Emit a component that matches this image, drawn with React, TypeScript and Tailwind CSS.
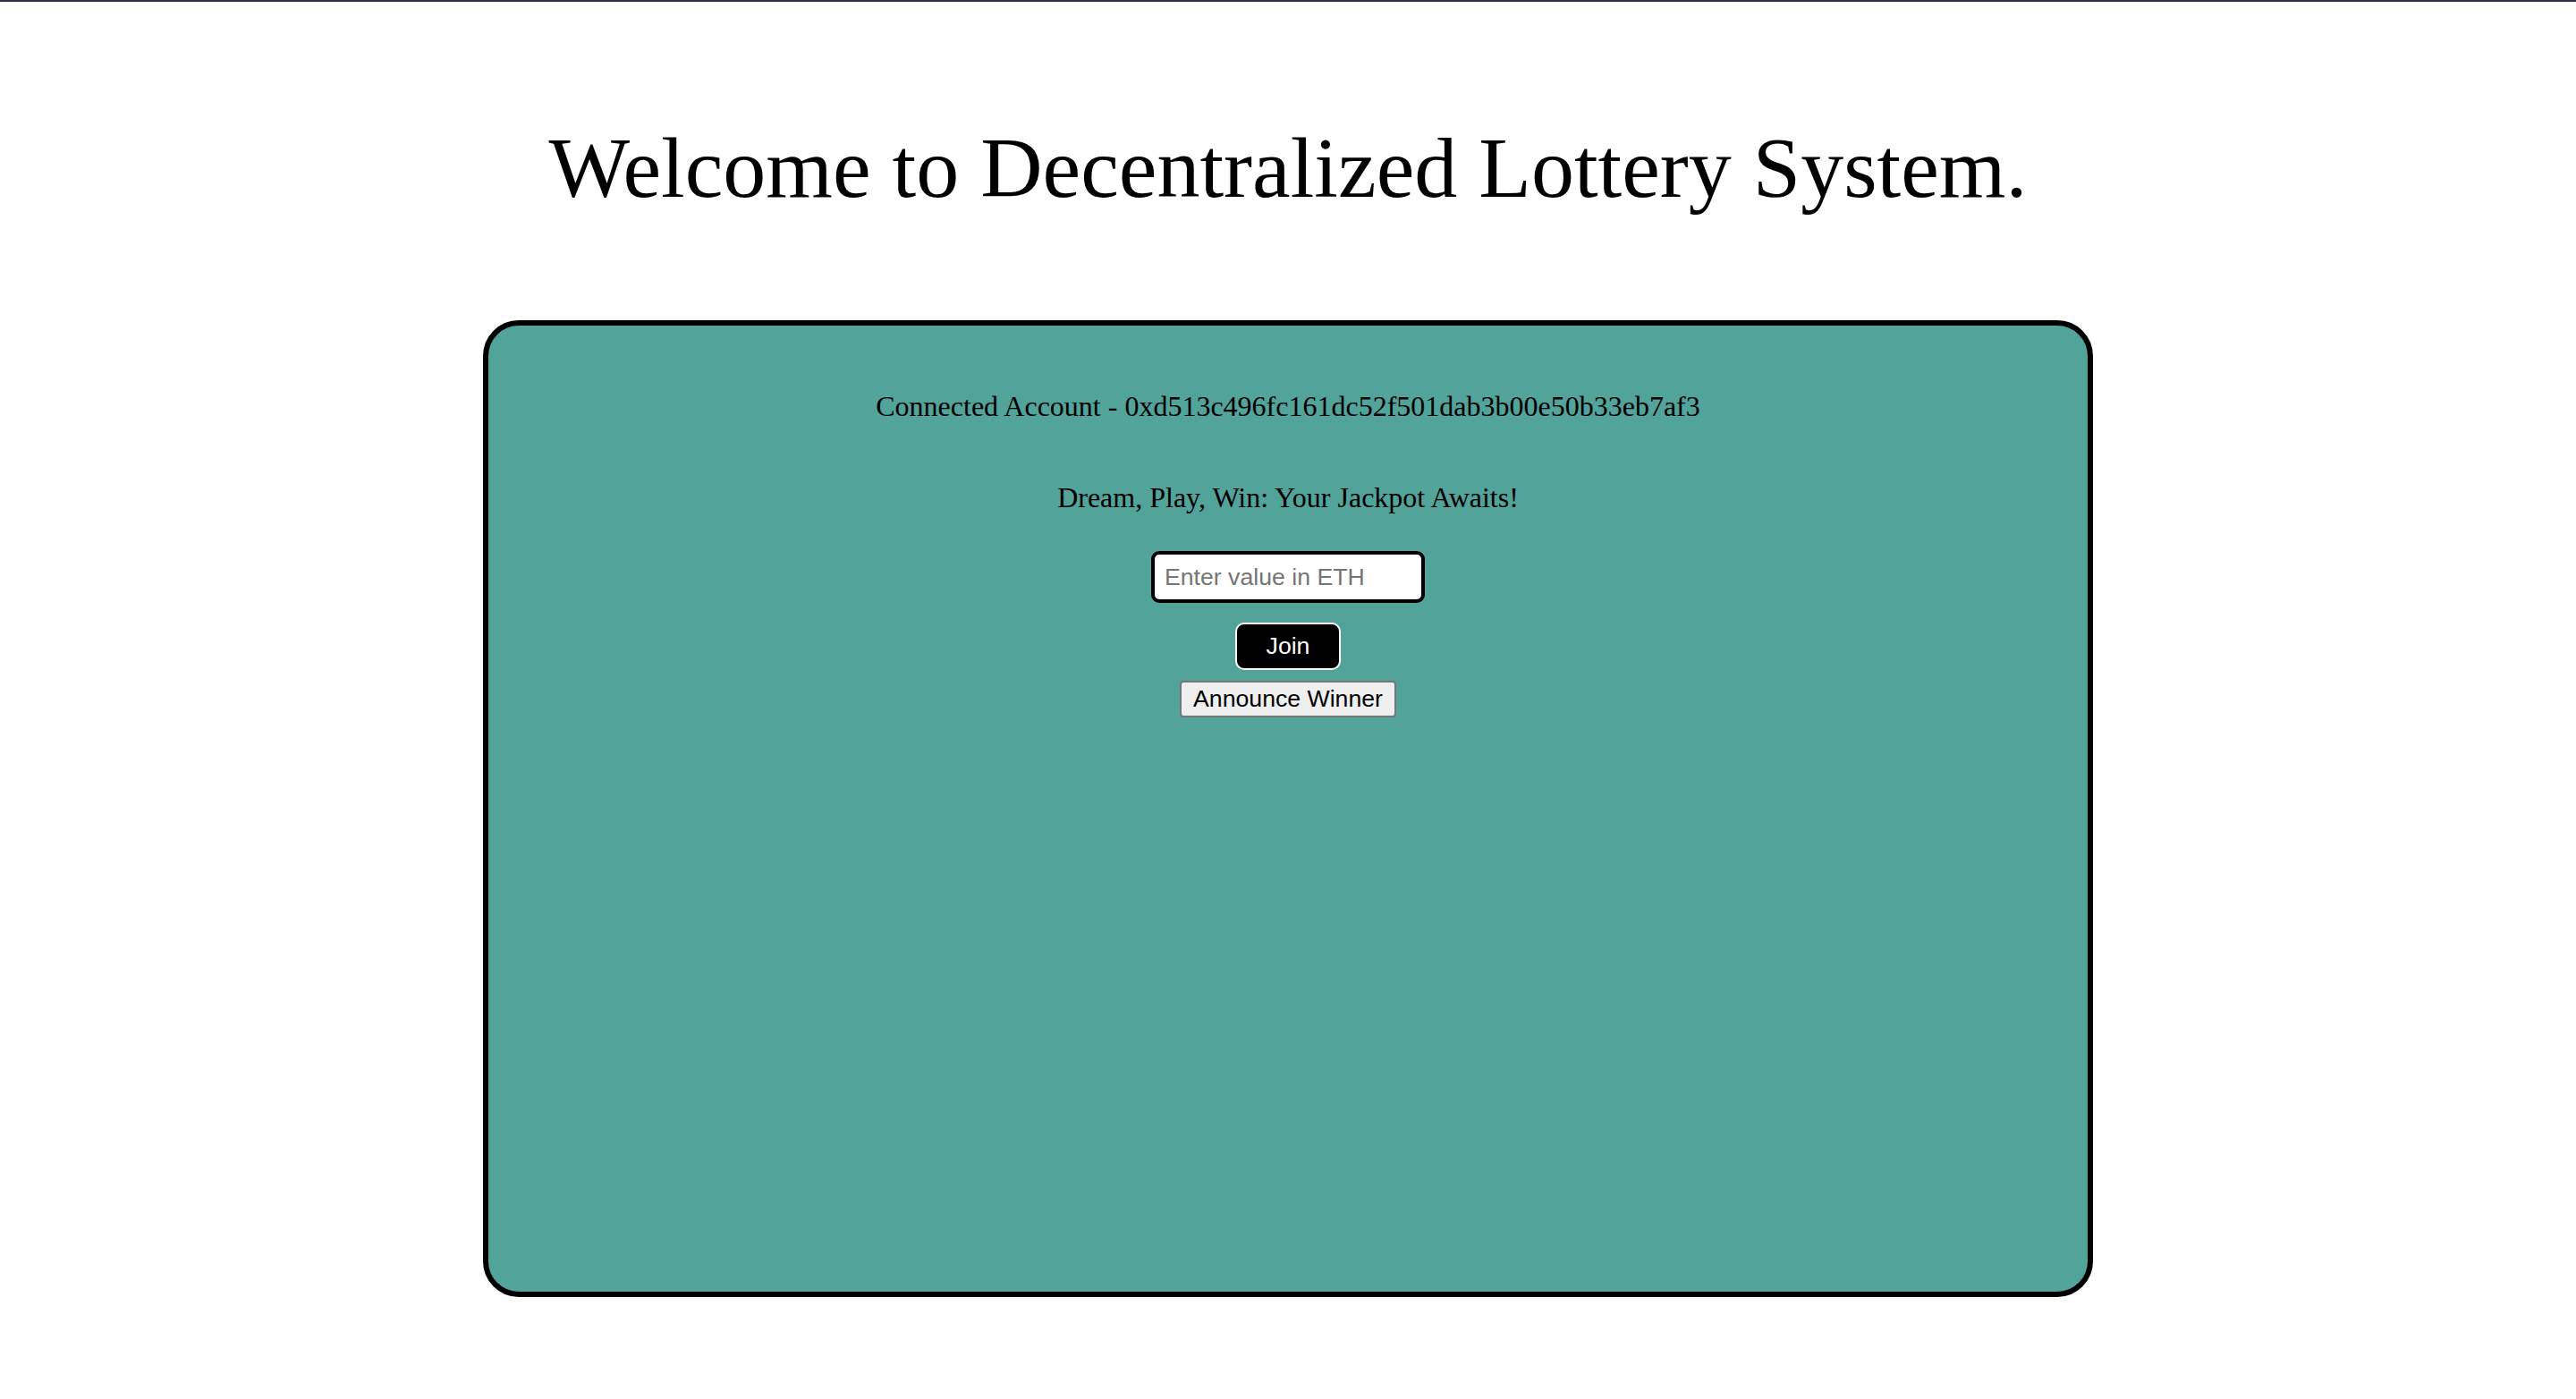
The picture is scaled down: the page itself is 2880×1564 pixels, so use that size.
import React from "react";

export default function App() {
  return (
    <div className="min-h-screen w-full bg-white" style={{ fontFamily: '"Liberation Serif", "Times New Roman", serif' }}>
      <div className="h-[2px] w-full bg-[#2f2f3d]" />
      <div className="pt-[131px]">
        <h1 className="text-center text-[96px] leading-[110px] font-normal text-black font-['Liberation_Serif',serif]">
          Welcome to Decentralized Lottery System.
        </h1>
      </div>
      <div className="mt-[115px] mx-auto w-[1800px] h-[1092px] rounded-[40px] border-[6px] border-black bg-[#52a39a] flex flex-col items-center pt-[72px]">
        <p className="text-[32px] leading-[36px] text-black font-['Liberation_Serif',serif]">
          Connected Account - 0xd513c496fc161dc52f501dab3b00e50b33eb7af3
        </p>
        <p className="mt-[66px] text-[32px] leading-[36px] text-black font-['Liberation_Serif',serif]">
          Dream, Play, Win: Your Jackpot Awaits!
        </p>
        <input
          type="text"
          placeholder="Enter value in ETH"
          className="mt-[42px] w-[306px] h-[58px] rounded-[9px] border-[4px] border-black bg-white pl-[11px] text-[26.67px] text-black placeholder:text-[#757575] outline-none font-['Liberation_Sans',Arial,sans-serif]"
        />
        <button className="mt-[22px] w-[118px] h-[53px] rounded-[10px] border-[2px] border-white bg-black text-white text-[26.67px] leading-none font-['Liberation_Sans',Arial,sans-serif]">
          Join
        </button>
        <button className="mt-[12px] w-[242px] h-[41px] rounded-[4px] border-[2px] border-[#767676] bg-[#efefef] text-black text-[26.67px] leading-none font-['Liberation_Sans',Arial,sans-serif]">
          Announce Winner
        </button>
      </div>
    </div>
  );
}
